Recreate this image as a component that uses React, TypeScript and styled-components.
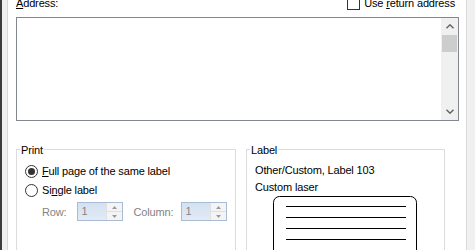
import React from "react";
import styled, { createGlobalStyle } from "styled-components";

const GlobalStyle = createGlobalStyle`
  html, body {
    margin: 0;
    padding: 0;
    background: #f0f0f0;
  }
  body {
    font-family: "Liberation Sans", Arial, sans-serif;
    font-size: 11px;
    letter-spacing: -0.15px;
    color: #000;
    overflow: hidden;
  }
`;

const Window = styled.div`
  display: flex;
  width: 475px;
  height: 250px;
  overflow: hidden;
  background: #f0f0f0;
`;

const LeftEdge = styled.div`
  flex: 0 0 5px;
  border-left: 2px solid #3c3c3c;
  background: #f0f0f0;
`;

const TabPage = styled.div`
  flex: 0 0 460px;
  box-sizing: border-box;
  background: #fff;
  border-left: 1px solid #d9d9d9;
  border-right: 1px solid #d9d9d9;
  padding: 0 7px 0 8px;
  display: flex;
  flex-direction: column;
`;

const TopRow = styled.div`
  flex-shrink: 0;
  display: flex;
  justify-content: space-between;
  align-items: center;
  height: 13px;
  line-height: 13px;
  margin-top: -3px;
  padding-right: 4px;
`;

const Check = styled.label`
  display: flex;
  align-items: center;
  gap: 4px;
`;

const CheckBox = styled.span`
  width: 13px;
  height: 13px;
  box-sizing: border-box;
  border: 1px solid #333;
  background: #fff;
`;

const Key = styled.u`
  text-decoration: underline;
  text-underline-offset: 1px;
`;

const AddressBox = styled.div`
  flex-shrink: 0;
  margin-top: 7px;
  height: 104px;
  box-sizing: border-box;
  border: 1px solid #828790;
  display: flex;
  justify-content: flex-end;
`;

const Scrollbar = styled.div`
  width: 17px;
  background: #f0f0f0;
  display: flex;
  flex-direction: column;
`;

const ScrollButton = styled.div`
  height: 17px;
  display: flex;
  align-items: center;
  justify-content: center;
`;

const Thumb = styled.div`
  height: 17px;
  margin: 0 1px;
  background: #cdcdcd;
`;

const Track = styled.div`
  flex: 1;
`;

const Groups = styled.div`
  flex-shrink: 0;
  display: flex;
  gap: 10px;
  margin-top: 21px;
`;

const GroupBox = styled.fieldset<{ $width: number }>`
  width: ${(p) => p.$width}px;
  height: 130px;
  box-sizing: border-box;
  margin: 0;
  padding: 0;
  min-width: 0;
  border: 1px solid #dcdcdc;
`;

const Legend = styled.legend`
  padding: 2px 1px 0;
  margin-left: 3px;
  line-height: 13px;
`;

const PrintBody = styled.div`
  padding: 5px 0 0 8px;
`;

const RadioRow = styled.label`
  display: flex;
  align-items: center;
  gap: 4px;
  height: 19px;
  line-height: 13px;
`;

const Radio = styled.span<{ $checked?: boolean }>`
  width: 13px;
  height: 13px;
  box-sizing: border-box;
  border: 1px solid #333;
  border-radius: 50%;
  display: flex;
  align-items: center;
  justify-content: center;

  &::after {
    content: "";
    display: ${(p) => (p.$checked ? "block" : "none")};
    width: 7px;
    height: 7px;
    border-radius: 50%;
    background: #333;
  }
`;

const SpinRow = styled.div`
  display: flex;
  align-items: center;
  height: 19px;
  margin-top: 2px;
  padding-left: 17px;
  color: #838383;
`;

const SpinLabel = styled.span<{ $before?: number; $after: number }>`
  margin-left: ${(p) => p.$before ?? 0}px;
  margin-right: ${(p) => p.$after}px;
`;

const SpinBox = styled.div`
  width: 46px;
  height: 19px;
  box-sizing: border-box;
  border: 1px solid #a9bcd4;
  display: flex;
  background: #fff;
`;

const SpinField = styled.div`
  flex: 1;
  padding-left: 3px;
  line-height: 17px;
  color: #838383;
  background: linear-gradient(#d3e1f1, #e2ebf6);
`;

const SpinButtons = styled.div`
  width: 15px;
  border-left: 1px solid #e0e0e0;
  display: flex;
  flex-direction: column;
  background: #f4f4f4;
`;

const SpinHalf = styled.div<{ $down?: boolean }>`
  flex: 1;
  display: flex;
  align-items: center;
  justify-content: center;
  border-top: ${(p) => (p.$down ? "1px solid #dedede" : "none")};
`;

const LabelBody = styled.div`
  padding: 5px 0 0 8px;
  line-height: 17px;
`;

const Preview = styled.svg`
  display: block;
  margin-left: 18px;
`;

function Chevron({ down }: { down?: boolean }) {
  return (
    <svg width="8" height="5" viewBox="0 0 8 5">
      <polyline
        points={down ? "0.5,0.8 4,4.2 7.5,0.8" : "0.5,4.2 4,0.8 7.5,4.2"}
        fill="none"
        stroke="#606060"
        strokeWidth="1.4"
      />
    </svg>
  );
}

function Arrow({ down }: { down?: boolean }) {
  return (
    <svg width="5" height="3" viewBox="0 0 5 3">
      <polygon points={down ? "0,0 5,0 2.5,3" : "0,3 5,3 2.5,0"} fill="#9a9a9a" />
    </svg>
  );
}

function Spinner({ value }: { value: string }) {
  return (
    <SpinBox>
      <SpinField>{value}</SpinField>
      <SpinButtons>
        <SpinHalf>
          <Arrow />
        </SpinHalf>
        <SpinHalf $down>
          <Arrow down />
        </SpinHalf>
      </SpinButtons>
    </SpinBox>
  );
}

function LabelPreview() {
  const lines = [10.5, 21.5, 32.5, 43.5];
  return (
    <Preview width="146" height="60" viewBox="0 0 146 60">
      <rect x="0.5" y="0.5" width="143" height="80" rx="6" fill="#fff" stroke="#000" />
      {lines.map((y) => (
        <line key={y} x1="13" y1={y} x2="133" y2={y} stroke="#000" />
      ))}
    </Preview>
  );
}

export default function App() {
  return (
    <>
      <GlobalStyle />
      <Window>
        <LeftEdge />
        <TabPage>
          <TopRow>
            <span>
              <Key>A</Key>ddress:
            </span>
            <Check>
              <CheckBox />
              <span>
                Use <Key>r</Key>eturn address
              </span>
            </Check>
          </TopRow>

          <AddressBox>
            <Scrollbar>
              <ScrollButton>
                <Chevron />
              </ScrollButton>
              <Thumb />
              <Track />
              <ScrollButton>
                <Chevron down />
              </ScrollButton>
            </Scrollbar>
          </AddressBox>

          <Groups>
            <GroupBox $width={220}>
              <Legend>Print</Legend>
              <PrintBody>
                <RadioRow>
                  <Radio $checked />
                  <span>
                    <Key>F</Key>ull page of the same label
                  </span>
                </RadioRow>
                <RadioRow>
                  <Radio />
                  <span>
                    Si<Key>n</Key>gle label
                  </span>
                </RadioRow>
                <SpinRow>
                  <SpinLabel $after={11}>Row:</SpinLabel>
                  <Spinner value="1" />
                  <SpinLabel $before={10} $after={8}>
                    Column:
                  </SpinLabel>
                  <Spinner value="1" />
                </SpinRow>
              </PrintBody>
            </GroupBox>

            <GroupBox $width={199}>
              <Legend>Label</Legend>
              <LabelBody>
                <div>Other/Custom, Label 103</div>
                <div>Custom laser</div>
                <LabelPreview />
              </LabelBody>
            </GroupBox>
          </Groups>
        </TabPage>
      </Window>
    </>
  );
}
